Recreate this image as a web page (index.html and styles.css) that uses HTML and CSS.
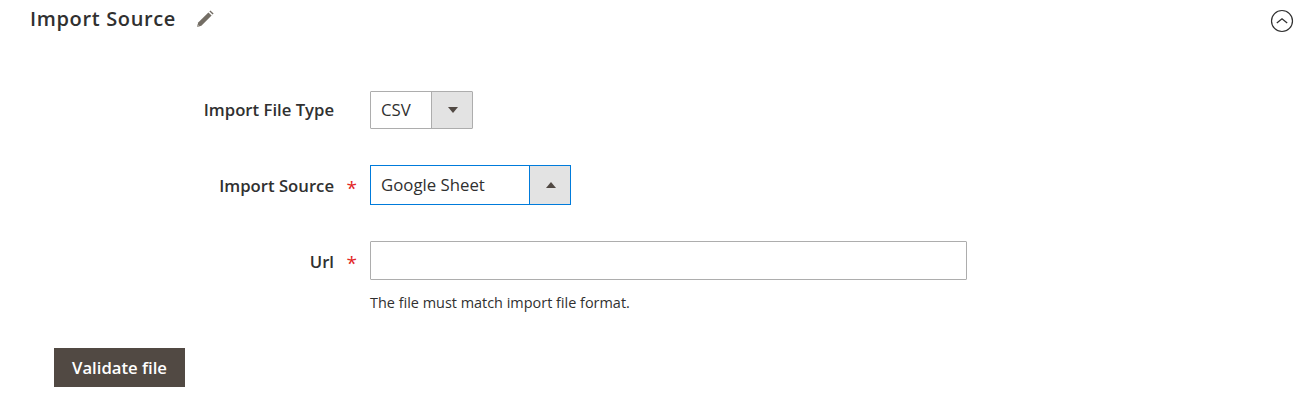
FILE: index.html
```html
<!DOCTYPE html>
<html lang="en">
<head>
  <meta charset="UTF-8">
  <title>Import Source</title>
  <link rel="stylesheet" href="styles.css">
</head>
<body>
  <div class="section-head">
    <h2 class="section-title">Import Source</h2>
    <svg class="edit-icon" width="20" height="20" viewBox="1 -1 20 20">
      <path d="M2 18l1.2-4.4L13.4 3.4l3.2 3.2L6.4 16.8z" fill="#736d64"/>
      <path d="M14.4 2.4l1-1 3.2 3.2-1 1z" fill="#736d64"/>
      <path d="M2 18l.7-2.6 1.9 1.9z" fill="#b5b1ab"/>
    </svg>
    <svg class="collapse-icon" width="24" height="24" viewBox="0 0 24 24">
      <circle cx="12" cy="12" r="10.5" fill="none" stroke="#303030" stroke-width="1.2"/>
      <path d="M6.8 14l5.2-4.2 5.2 4.2" fill="none" stroke="#303030" stroke-width="1.3"/>
    </svg>
  </div>

  <form class="form">
    <div class="field">
      <label class="field-label label-plain">Import File Type</label>
      <div class="select select-small">
        <span class="select-value">CSV</span>
        <span class="select-arrow"><i class="arrow-down"></i></span>
      </div>
    </div>
    <div class="field">
      <label class="field-label required">Import Source</label>
      <div class="select select-open">
        <span class="select-value">Google Sheet</span>
        <span class="select-arrow"><i class="arrow-up"></i></span>
      </div>
    </div>
    <div class="field field-url">
      <label class="field-label required">Url</label>
      <div class="control">
        <input class="text-input" type="text">
        <p class="note">The file must match import file format.</p>
      </div>
    </div>
  </form>

  <button class="btn" type="button">Validate file</button>
</body>
</html>
```

FILE: styles.css
```css
body {
  margin: 0;
  height: 405px;
  overflow: hidden;
  background: #fff;
  font-family: 'Open Sans', sans-serif;
  color: #303030;
}
.section-head {
  display: flex;
  align-items: center;
  height: 36px;
  padding: 0 16px 2px 30px;
}
.section-title {
  margin: 0;
  font-size: 20px;
  font-weight: 600;
  letter-spacing: 0.65px;
  color: #303030;
}
.edit-icon {
  margin-left: 20px;
}
.collapse-icon {
  margin-left: auto;
  margin-top: 6px;
}
.form {
  padding-top: 53px;
}
.field {
  display: flex;
  align-items: center;
  margin-bottom: 36px;
}
.field-url {
  align-items: flex-start;
  margin-bottom: 0;
}
.field-label {
  width: 334px;
  margin-right: 36px;
  padding-top: 1px;
  text-align: right;
  font-size: 16.7px;
  font-weight: 600;
  color: #303030;
  position: relative;
}
.label-plain {
  padding-top: 0;
  margin-bottom: 1px;
}
.field-url .field-label {
  line-height: 40px;
}
.required::after {
  content: '*';
  position: absolute;
  right: -23px;
  top: 2px;
  color: #e22626;
  font-size: 19px;
  font-weight: 400;
}
.select {
  display: flex;
  box-sizing: border-box;
  width: 201px;
  height: 40px;
  border: 1px solid #007bdb;
  background: #fff;
}
.select-small {
  width: 103px;
  height: 38px;
  border-color: #adadad;
  border-radius: 1px;
}
.select-value {
  flex: 1;
  padding-left: 10px;
  font-size: 16.8px;
  line-height: 37px;
  color: #303030;
}
.select-small .select-value {
  line-height: 35px;
}
.select-arrow {
  display: flex;
  align-items: center;
  justify-content: center;
  box-sizing: border-box;
  width: 41px;
  padding-left: 2px;
  background: #e3e3e3;
  border-left: 1px solid #adadad;
}
.select-open .select-arrow {
  border-left-color: #007bdb;
}
.arrow-down, .arrow-up {
  width: 0;
  height: 0;
  border-left: 5.5px solid transparent;
  border-right: 5.5px solid transparent;
}
.arrow-down {
  border-top: 6px solid #514943;
}
.arrow-up {
  border-bottom: 6px solid #514943;
}
.control {
  width: 597px;
}
.text-input {
  display: block;
  box-sizing: border-box;
  width: 100%;
  height: 39px;
  border: 1px solid #adadad;
  border-radius: 1px;
  background: #fff;
}
.note {
  margin: 13px 0 0;
  font-size: 14.45px;
  line-height: 19px;
  color: #303030;
}
.btn {
  display: block;
  box-sizing: border-box;
  width: 131px;
  height: 39px;
  margin: 36px 0 0 54px;
  padding: 0;
  border: none;
  background: #514943;
  color: #fff;
  font-family: 'Open Sans', sans-serif;
  font-size: 16.7px;
  font-weight: 600;
}
```
